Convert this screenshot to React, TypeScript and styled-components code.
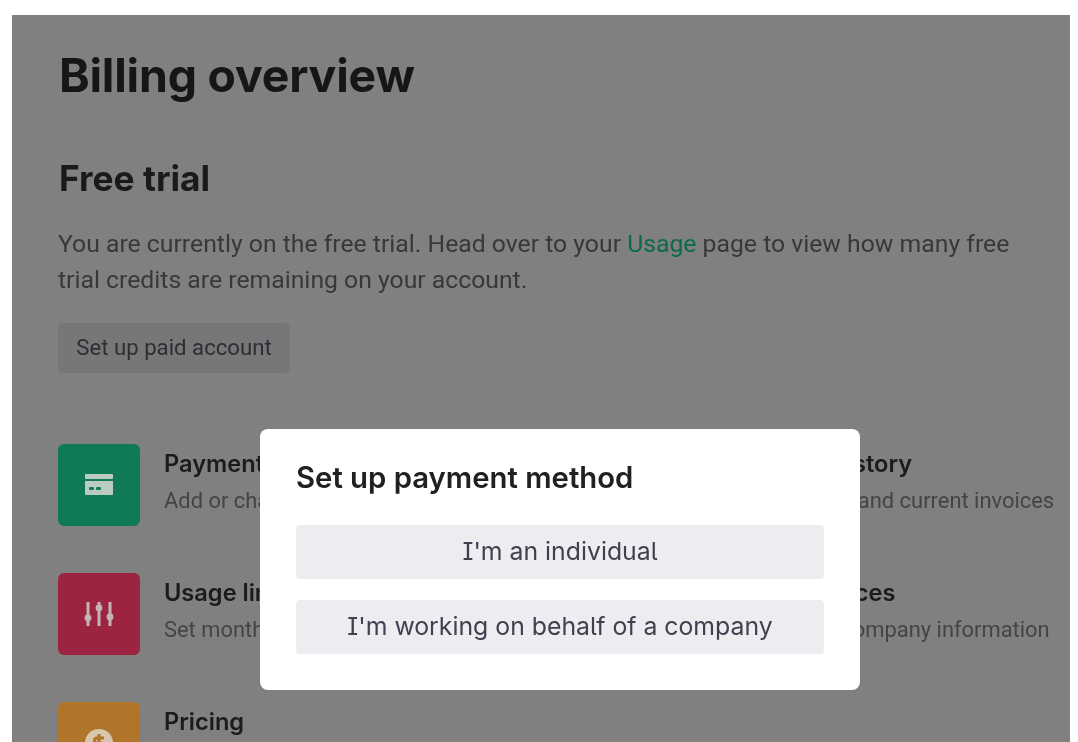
import styled, { createGlobalStyle } from "styled-components";

const GlobalStyle = createGlobalStyle`
  html, body {
    margin: 0;
    height: 100%;
    background: #fff;
    overflow: hidden;
  }
  body {
    font-family: Inter, "Liberation Sans", sans-serif;
  }
`;

const Frame = styled.div`
  box-sizing: border-box;
  height: 742px;
  padding: 15px 8px 0 12px;
`;

const Backdrop = styled.div`
  position: relative;
  box-sizing: border-box;
  height: 100%;
  padding: 28px 0 0 46px;
  background: #808080;
  overflow: hidden;
  filter: blur(0.4px);
`;

const PageTitle = styled.h1`
  margin: 0;
  padding-left: 1px;
  font-size: 46.4px;
  line-height: 64px;
  font-weight: 650;
  letter-spacing: -0.2px;
  color: #161617;
`;

const SectionTitle = styled.h2`
  margin: 51px 0 0;
  padding-left: 1px;
  font-size: 35.3px;
  line-height: 42px;
  font-weight: 650;
  color: #1a1a1b;
`;

const Lead = styled.p`
  margin: 26px 0 0;
  width: 980px;
  font-family: Roboto, sans-serif;
  font-size: 24.75px;
  line-height: 36px;
  color: #38383b;
`;

const LeadLink = styled.span`
  color: #0c6a4b;
`;

const GhostButton = styled.div`
  display: flex;
  align-items: center;
  justify-content: center;
  width: 232px;
  height: 50px;
  margin-top: 25px;
  padding-bottom: 3px;
  box-sizing: border-box;
  border-radius: 5px;
  background: #77777a;
  font-family: Roboto, sans-serif;
  font-size: 22.2px;
  color: #2e2e31;
`;

const CardGrid = styled.div`
  display: grid;
  grid-template-columns: 593px 1fr;
  grid-auto-rows: 82px;
  row-gap: 47px;
  margin-top: 71px;
`;

const Card = styled.div`
  display: flex;
  align-items: flex-start;
  gap: 24px;
  white-space: nowrap;
`;

const IconTile = styled.div<{ $color: string }>`
  flex: none;
  display: flex;
  align-items: center;
  justify-content: center;
  width: 82px;
  height: 82px;
  border-radius: 6px;
  background: ${(p) => p.$color};
`;

const CardText = styled.div`
  padding-top: 6px;
`;

const CardTitle = styled.div`
  font-size: 23.6px;
  line-height: 28px;
  font-weight: 600;
  color: #1b1b1d;
`;

const CardSub = styled.div`
  margin-top: 9px;
  font-family: Roboto, sans-serif;
  font-size: 21.9px;
  line-height: 28px;
  color: #444447;
`;

const Modal = styled.div`
  position: absolute;
  left: 248px;
  top: 414px;
  box-sizing: border-box;
  width: 600px;
  height: 261px;
  padding: 29px 36px 0;
  border-radius: 8px;
  background: #fff;
`;

const ModalTitle = styled.h3`
  margin: 0;
  font-size: 29.3px;
  line-height: 40px;
  font-weight: 600;
  color: #202123;
`;

const ChoiceList = styled.div`
  display: flex;
  flex-direction: column;
  gap: 21px;
  margin-top: 27px;
`;

const Choice = styled.button`
  display: flex;
  align-items: center;
  justify-content: center;
  height: 54px;
  padding: 0 0 3px;
  border: 0;
  border-radius: 4px;
  background: #ececf1;
  font-family: inherit;
  font-size: 24.8px;
  font-feature-settings: "ss02";
  color: #40414f;
`;

const CardIcon = () => (
  <svg width="30" height="24" viewBox="0 0 30 24" fill="#bccbc2">
    <rect x="1" y="1" width="28" height="5" rx="1" />
    <path d="M1 8h28v13a1 1 0 0 1-1 1H2a1 1 0 0 1-1-1z" />
    <rect x="5" y="14" width="5" height="3" rx="1" fill="#0f7a55" />
    <rect x="12" y="14" width="5" height="3" rx="1" fill="#0f7a55" />
  </svg>
);

const SlidersIcon = () => (
  <svg width="30" height="26" viewBox="0 0 30 26" fill="#c4b4b4" stroke="#c4b4b4">
    <path d="M4 1v24M15 1v24M26 1v24" strokeWidth="3" />
    <circle cx="4" cy="17" r="3.4" stroke="none" />
    <circle cx="15" cy="7" r="3.4" stroke="none" />
    <circle cx="26" cy="16" r="3.4" stroke="none" />
  </svg>
);

const DollarIcon = () => (
  <svg width="30" height="30" viewBox="0 0 30 30">
    <circle cx="15" cy="15" r="14" fill="#d6c7ad" />
    <path d="M15 6v18M20 10h-7a2.500 2.500 0 0 0 0 5h4a2.500 2.500 0 0 1 0 5h-7" fill="none" stroke="#b0752a" strokeWidth="3" />
  </svg>
);

const cards = [
  { title: "Payment methods", sub: "Add or change payment method", color: "#0f7a55", icon: <CardIcon /> },
  { title: "Billing history", sub: "View past and current invoices", color: "#5436a5", icon: <CardIcon /> },
  { title: "Usage limits", sub: "Set monthly spend limits", color: "#9c2440", icon: <SlidersIcon /> },
  { title: "Preferences", sub: "Manage company information", color: "#2a6fa8", icon: <SlidersIcon /> },
  { title: "Pricing", color: "#b0752a", icon: <DollarIcon /> },
];

export default function App() {
  return (
    <Frame>
      <GlobalStyle />
      <Backdrop>
        <PageTitle>Billing overview</PageTitle>
        <SectionTitle>Free trial</SectionTitle>
        <Lead>
          You are currently on the free trial. Head over to your <LeadLink>Usage</LeadLink> page to view how many free
          trial credits are remaining on your account.
        </Lead>
        <GhostButton>Set up paid account</GhostButton>
        <CardGrid>
          {cards.map((c) => (
            <Card key={c.title}>
              <IconTile $color={c.color}>{c.icon}</IconTile>
              <CardText>
                <CardTitle>{c.title}</CardTitle>
                {c.sub && <CardSub>{c.sub}</CardSub>}
              </CardText>
            </Card>
          ))}
        </CardGrid>
        <Modal>
          <ModalTitle>Set up payment method</ModalTitle>
          <ChoiceList>
            <Choice>I'm an individual</Choice>
            <Choice>I'm working on behalf of a company</Choice>
          </ChoiceList>
        </Modal>
      </Backdrop>
    </Frame>
  );
}
